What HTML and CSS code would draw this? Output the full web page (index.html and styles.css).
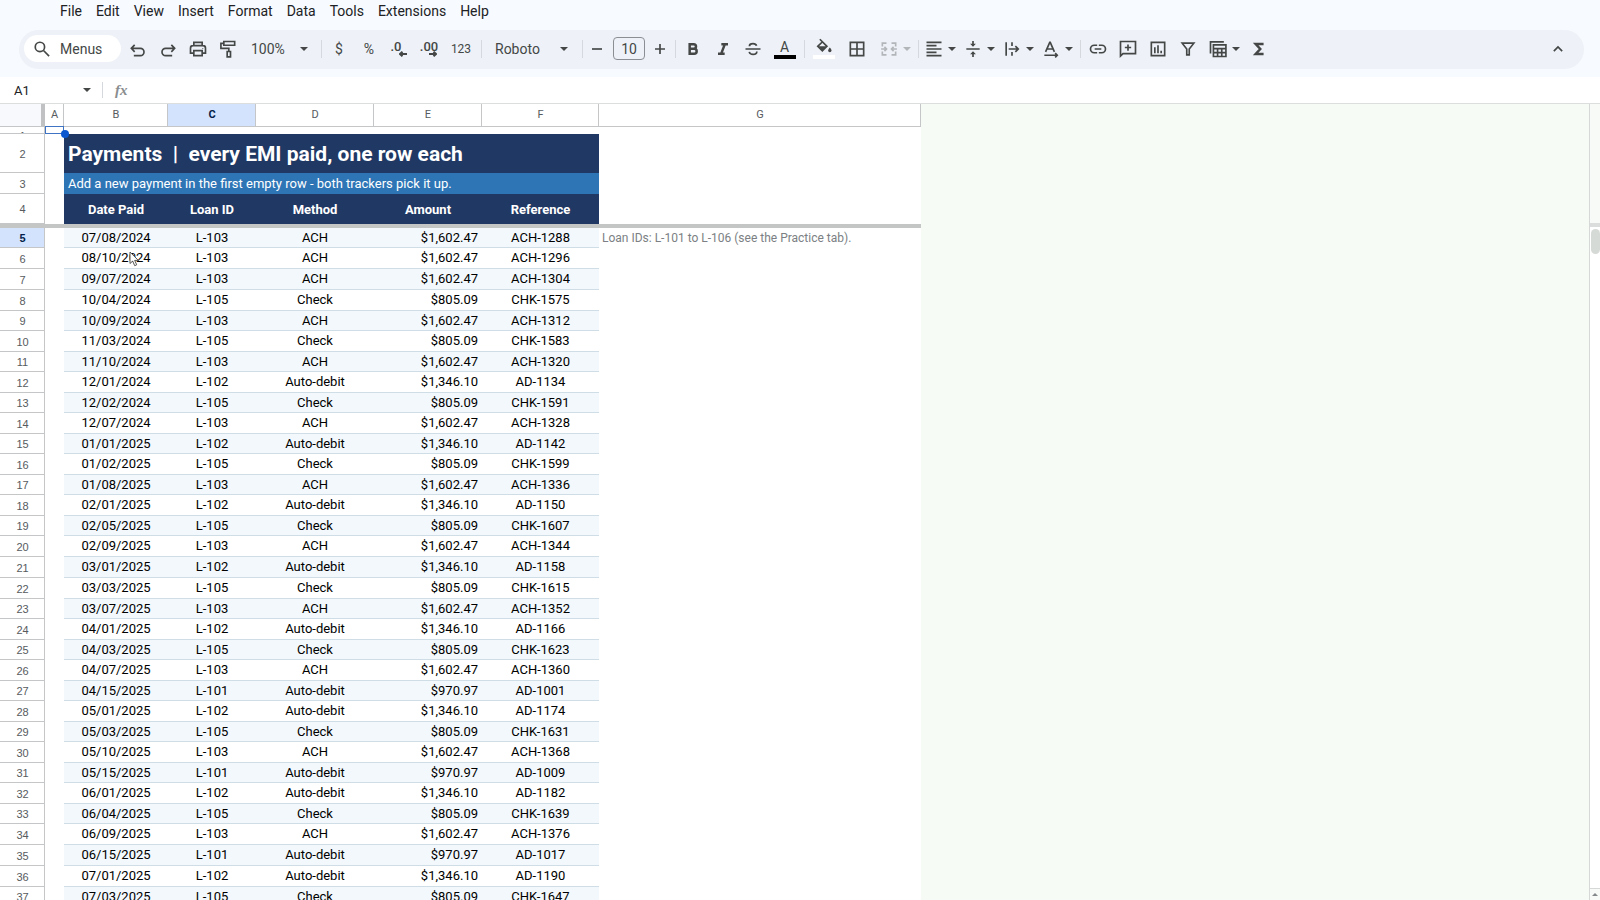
FILE: index.html
```html
<!DOCTYPE html>
<html lang="en">
<head>
<meta charset="utf-8">
<title>Payments</title>
<meta name="viewport" content="width=device-width, initial-scale=1">
<link rel="stylesheet" href="styles.css">
</head>
<body>
<header class="top">
  <nav class="menubar" aria-label="Main menu">
    <button>File</button><button>Edit</button><button>View</button><button>Insert</button><button>Format</button><button>Data</button><button>Tools</button><button>Extensions</button><button>Help</button>
  </nav>
  <div class="toolbar" role="toolbar" aria-label="Formatting">
    <button class="search"><svg class="ic" viewBox="0 0 24 24"><circle cx="9.5" cy="9.5" r="5.6"/><path d="M13.8 13.8L20.5 20.5"/></svg><span>Menus</span></button>
    <button class="tb" aria-label="Undo"><svg class="ic" viewBox="0 0 24 24"><path d="M8 5L4 9.2L8 13.4M4.5 9.2H14.8a4.4 4.4 0 0 1 0 8.8H7" transform="translate(0 2)"/></svg></button>
    <button class="tb" aria-label="Redo"><svg class="ic" viewBox="0 0 24 24"><path d="M16 5L20 9.2L16 13.4M19.5 9.2H9.2a4.4 4.4 0 0 0 0 8.8H17" transform="translate(0 2)"/></svg></button>
    <button class="tb" aria-label="Print"><svg class="ic" viewBox="0 0 24 24"><path d="M7 8V4h10v4M7 17H3v-6a3 3 0 0 1 3-3h12a3 3 0 0 1 3 3v6h-4M7 14h10v6H7z"/><circle class="fill" cx="17.8" cy="11.3" r=".6"/></svg></button>
    <button class="tb" aria-label="Paint format"><svg class="ic" viewBox="0 0 24 24"><path d="M7 3h13v4.5H7zM7 5.2H3.5v6H13V15M11 15h4v6.5h-4z"/></svg></button>
    <label class="zoom"><select aria-label="Zoom"><option>100%</option></select><i class="caret"></i></label>
    <span class="sep"></span>
    <button class="tb cur">$</button>
    <button class="tb cur">%</button>
    <button class="tb dec less" aria-label="Decrease decimal places"><span>.0</span><svg class="arr" viewBox="0 0 8 6"><path d="M8 3H1M3.5 .7L1 3L3.5 5.3"/></svg></button>
    <button class="tb dec" aria-label="Increase decimal places"><span>.00</span><svg class="arr" viewBox="0 0 8 6"><path d="M0 3H7M4.5 .7L7 3L4.5 5.3"/></svg></button>
    <button class="tb num">123</button>
    <span class="sep"></span>
    <label class="font"><select aria-label="Font"><option>Roboto</option></select><i class="caret"></i></label>
    <span class="sep"></span>
    <button class="tb small" aria-label="Decrease font size"><svg class="ic" viewBox="0 0 24 24"><path d="M6 12H18"/></svg></button>
    <input class="size" aria-label="Font size" value="10">
    <button class="tb small" aria-label="Increase font size"><svg class="ic" viewBox="0 0 24 24"><path d="M6 12H18M12 6V18"/></svg></button>
    <span class="sep"></span>
    <button class="tb" aria-label="Bold"><svg class="ic bold" viewBox="0 0 24 24"><path d="M8 6.2h4.8a2.8 2.8 0 0 1 0 5.6H8zM8 11.8h5.4a3 3 0 0 1 0 6H8z"/></svg></button>
    <button class="tb" aria-label="Italic"><svg class="ic ital" viewBox="0 0 24 24"><path d="M10 6.2h8M6 17.8h8M14.2 6.2L9.8 17.8"/></svg></button>
    <button class="tb" aria-label="Strikethrough"><svg class="ic" viewBox="0 0 24 24"><path d="M3 12h18M16.3 8.2C15.8 6.6 14.2 5.6 12 5.6c-2.600 0-4.300 1.200-4.300 3M7.500 15.500c.4 1.900 2.100 3 4.600 3 2.700 0 4.500-1.200 4.500-3.500"/></svg></button>
    <button class="tb color"><span>A</span><i class="bar black"></i></button>
    <span class="sep"></span>
    <button class="tb color" aria-label="Fill color"><svg class="ic" viewBox="0 0 24 24"><path d="M7 1.500L15.500 10L10 15.500L4.500 10L10.200 4.500"/><path class="fill" d="M5 10h10l-5 5z"/><path class="fill" d="M19 11.500s-2 2.300-2 3.600a2 2 0 0 0 4 0c0-1.300-2-3.600-2-3.600z"/></svg><i class="bar white"></i></button>
    <button class="tb wide" aria-label="Borders"><svg class="ic" viewBox="0 0 24 24"><path d="M4 4h16v16H4zM12 4v16M4 12h16"/></svg></button>
    <button class="dd off lead" aria-label="Merge cells"><svg class="ic" viewBox="0 0 24 24"><path d="M9 5H4v4M4 15v4h5M15 5h5v4M20 15v4h-5M2.500 12H9M6.500 9.500L9 12l-2.500 2.500M21.500 12H15M17.500 9.500L15 12l2.500 2.500"/></svg><i class="caret"></i></button>
    <span class="sep"></span>
    <button class="dd" aria-label="Horizontal align"><svg class="ic" viewBox="0 0 24 24"><path d="M3 4h18M3 8h12M3 12h18M3 16h12M3 20h18"/></svg><i class="caret"></i></button>
    <button class="dd" aria-label="Vertical align"><svg class="ic" viewBox="0 0 24 24"><path d="M4 12h16M12 2.500V8M12 21.500V16"/><path class="fill" d="M8.500 5.800h7L12 9.300zM8.500 18.200h7L12 14.700z"/></svg><i class="caret"></i></button>
    <button class="dd" aria-label="Text wrapping"><svg class="ic" viewBox="0 0 24 24"><path d="M5 4v16M12 4v4.500M12 15.500V20M8 12h11.500M16 8.500l3.500 3.500l-3.500 3.500"/></svg><i class="caret"></i></button>
    <button class="dd" aria-label="Text rotation"><svg class="ic" viewBox="0 0 24 24"><path d="M5.500 15.500L10.500 4h.6l5 11.500M7.200 12h7.200M4 19.500h15M17 17l2.500 2.500L17 22"/></svg><i class="caret"></i></button>
    <span class="sep"></span>
    <button class="tb" aria-label="Insert link"><svg class="ic" viewBox="0 0 24 24"><path d="M11 7.500H7.500a4.500 4.500 0 0 0 0 9H11M13 7.500h3.500a4.500 4.500 0 0 1 0 9H13M8 12h8"/></svg></button>
    <button class="tb" aria-label="Insert comment"><svg class="ic" viewBox="0 0 24 24"><path d="M3 3h18v14.500H6L3 20.500zM12 6.500v7.500M8.200 10.200h7.600"/></svg></button>
    <button class="tb" aria-label="Insert chart"><svg class="ic" viewBox="0 0 24 24"><path d="M4 4h16v16H4zM8.200 10v7M12 7.500V17M15.800 14v3"/></svg></button>
    <button class="tb" aria-label="Create a filter"><svg class="ic" viewBox="0 0 24 24"><path d="M5 5h14l-5.500 7v7h-3v-7z"/></svg></button>
    <button class="dd lead" aria-label="Tables"><svg class="ic" viewBox="0 0 24 24"><path d="M3 17.500V3.500h16M6.500 7h15v14h-15zM6.500 11.500h15M6.500 16.300h15M11.500 11.500V21M16.500 11.500V21"/></svg><i class="caret"></i></button>
    <button class="tb" aria-label="Functions"><svg class="ic sigma" viewBox="0 0 24 24"><path d="M17.500 6H8l5.500 6L8 18h9.500"/></svg></button>
    <button class="tb hide" aria-label="Hide the menus"><svg class="ic" viewBox="0 0 24 24"><path d="M7 14.500l5-5l5 5"/></svg></button>
  </div>
</header>
<div class="formula">
  <label class="name"><input aria-label="Name box" value="A1"><i class="caret"></i></label>
  <span class="fsep"></span>
  <label class="fx" for="fbar">fx</label>
  <input class="fbar" id="fbar" aria-label="Formula bar">
</div>
<main class="sheet">
  <div class="pane">
    <table class="grid">
      <colgroup><col class="c0"><col class="c1"><col class="c2"><col class="c3"><col class="c4"><col class="c5"><col class="c6"><col class="c7"></colgroup>
      <thead>
        <tr class="cols"><th class="corner"></th><th>A</th><th>B</th><th class="on">C</th><th>D</th><th>E</th><th>F</th><th>G</th></tr>
        <tr class="r1"><th><div class="clip">1</div></th><td class="sel"><i class="box"></i><i class="dot"></i></td><td colspan="6"></td></tr>
        <tr class="r2"><th>2</th><td></td><td class="title" colspan="5">Payments&nbsp; |&nbsp; every EMI paid, one row each</td><td></td></tr>
        <tr class="r3"><th>3</th><td></td><td class="sub" colspan="5">Add a new payment in the first empty row - both trackers pick it up.</td><td></td></tr>
        <tr class="r4"><th>4</th><td></td><td class="h">Date Paid</td><td class="h">Loan ID</td><td class="h">Method</td><td class="h">Amount</td><td class="h">Reference</td><td></td></tr>
        <tr class="freeze"><td colspan="8"></td></tr>
      </thead>
      <tbody>
        <tr><th class="on">5</th><td></td><td>07/08/2024</td><td>L-103</td><td>ACH</td><td>$1,602.47</td><td>ACH-1288</td><td class="note">Loan IDs: L-101 to L-106 (see the Practice tab).</td></tr>
        <tr><th>6</th><td></td><td>08/10/2024</td><td>L-103</td><td>ACH</td><td>$1,602.47</td><td>ACH-1296</td><td></td></tr>
        <tr><th>7</th><td></td><td>09/07/2024</td><td>L-103</td><td>ACH</td><td>$1,602.47</td><td>ACH-1304</td><td></td></tr>
        <tr><th>8</th><td></td><td>10/04/2024</td><td>L-105</td><td>Check</td><td>$805.09</td><td>CHK-1575</td><td></td></tr>
        <tr><th>9</th><td></td><td>10/09/2024</td><td>L-103</td><td>ACH</td><td>$1,602.47</td><td>ACH-1312</td><td></td></tr>
        <tr><th>10</th><td></td><td>11/03/2024</td><td>L-105</td><td>Check</td><td>$805.09</td><td>CHK-1583</td><td></td></tr>
        <tr><th>11</th><td></td><td>11/10/2024</td><td>L-103</td><td>ACH</td><td>$1,602.47</td><td>ACH-1320</td><td></td></tr>
        <tr><th>12</th><td></td><td>12/01/2024</td><td>L-102</td><td>Auto-debit</td><td>$1,346.10</td><td>AD-1134</td><td></td></tr>
        <tr><th>13</th><td></td><td>12/02/2024</td><td>L-105</td><td>Check</td><td>$805.09</td><td>CHK-1591</td><td></td></tr>
        <tr><th>14</th><td></td><td>12/07/2024</td><td>L-103</td><td>ACH</td><td>$1,602.47</td><td>ACH-1328</td><td></td></tr>
        <tr><th>15</th><td></td><td>01/01/2025</td><td>L-102</td><td>Auto-debit</td><td>$1,346.10</td><td>AD-1142</td><td></td></tr>
        <tr><th>16</th><td></td><td>01/02/2025</td><td>L-105</td><td>Check</td><td>$805.09</td><td>CHK-1599</td><td></td></tr>
        <tr><th>17</th><td></td><td>01/08/2025</td><td>L-103</td><td>ACH</td><td>$1,602.47</td><td>ACH-1336</td><td></td></tr>
        <tr><th>18</th><td></td><td>02/01/2025</td><td>L-102</td><td>Auto-debit</td><td>$1,346.10</td><td>AD-1150</td><td></td></tr>
        <tr><th>19</th><td></td><td>02/05/2025</td><td>L-105</td><td>Check</td><td>$805.09</td><td>CHK-1607</td><td></td></tr>
        <tr><th>20</th><td></td><td>02/09/2025</td><td>L-103</td><td>ACH</td><td>$1,602.47</td><td>ACH-1344</td><td></td></tr>
        <tr><th>21</th><td></td><td>03/01/2025</td><td>L-102</td><td>Auto-debit</td><td>$1,346.10</td><td>AD-1158</td><td></td></tr>
        <tr><th>22</th><td></td><td>03/03/2025</td><td>L-105</td><td>Check</td><td>$805.09</td><td>CHK-1615</td><td></td></tr>
        <tr><th>23</th><td></td><td>03/07/2025</td><td>L-103</td><td>ACH</td><td>$1,602.47</td><td>ACH-1352</td><td></td></tr>
        <tr><th>24</th><td></td><td>04/01/2025</td><td>L-102</td><td>Auto-debit</td><td>$1,346.10</td><td>AD-1166</td><td></td></tr>
        <tr><th>25</th><td></td><td>04/03/2025</td><td>L-105</td><td>Check</td><td>$805.09</td><td>CHK-1623</td><td></td></tr>
        <tr><th>26</th><td></td><td>04/07/2025</td><td>L-103</td><td>ACH</td><td>$1,602.47</td><td>ACH-1360</td><td></td></tr>
        <tr><th>27</th><td></td><td>04/15/2025</td><td>L-101</td><td>Auto-debit</td><td>$970.97</td><td>AD-1001</td><td></td></tr>
        <tr><th>28</th><td></td><td>05/01/2025</td><td>L-102</td><td>Auto-debit</td><td>$1,346.10</td><td>AD-1174</td><td></td></tr>
        <tr><th>29</th><td></td><td>05/03/2025</td><td>L-105</td><td>Check</td><td>$805.09</td><td>CHK-1631</td><td></td></tr>
        <tr><th>30</th><td></td><td>05/10/2025</td><td>L-103</td><td>ACH</td><td>$1,602.47</td><td>ACH-1368</td><td></td></tr>
        <tr><th>31</th><td></td><td>05/15/2025</td><td>L-101</td><td>Auto-debit</td><td>$970.97</td><td>AD-1009</td><td></td></tr>
        <tr><th>32</th><td></td><td>06/01/2025</td><td>L-102</td><td>Auto-debit</td><td>$1,346.10</td><td>AD-1182</td><td></td></tr>
        <tr><th>33</th><td></td><td>06/04/2025</td><td>L-105</td><td>Check</td><td>$805.09</td><td>CHK-1639</td><td></td></tr>
        <tr><th>34</th><td></td><td>06/09/2025</td><td>L-103</td><td>ACH</td><td>$1,602.47</td><td>ACH-1376</td><td></td></tr>
        <tr><th>35</th><td></td><td>06/15/2025</td><td>L-101</td><td>Auto-debit</td><td>$970.97</td><td>AD-1017</td><td></td></tr>
        <tr><th>36</th><td></td><td>07/01/2025</td><td>L-102</td><td>Auto-debit</td><td>$1,346.10</td><td>AD-1190</td><td></td></tr>
        <tr><th>37</th><td></td><td>07/03/2025</td><td>L-105</td><td>Check</td><td>$805.09</td><td>CHK-1647</td><td></td></tr>
      </tbody>
    </table>
    <svg class="pointer" viewBox="0 0 10 16"><path d="M1 1v11.500l2.700-2.400l2 4.600l2-.9l-2-4.400h3.600z"/></svg>
  </div>
  <div class="vbar">
    <div class="vtop"></div>
    <div class="track"><div class="thumb"></div></div>
    <button class="up" aria-label="Scroll up"><i></i></button>
  </div>
</main>
</body>
</html>
```

FILE: styles.css
```css
* { box-sizing: border-box; }

body {
  margin: 0;
  height: 100vh;
  overflow: hidden;
  display: flex;
  flex-direction: column;
  background: #fefffe;
  color: #444746;
  font-family: Roboto, "Liberation Sans", sans-serif;
  font-size: 14px;
}

button, input, select {
  font: inherit;
  color: inherit;
  background: none;
  border: 0;
  padding: 0;
  margin: 0;
  outline: 0;
  appearance: none;
}

/* Header */
.top {
  flex: none;
  background: #f7fafe;
  padding: 0 16px 8px 19px;
}
.menubar {
  display: flex;
  gap: 14px;
  height: 22px;
  margin-bottom: 8px;
  padding-left: 41px;
  color: #202124;
}
.toolbar {
  display: flex;
  align-items: center;
  height: 39px;
  padding: 0 11px 2px 5px;
  border-radius: 20px;
  background: #eef2f8;
}
.search {
  display: flex;
  align-items: center;
  gap: 8px;
  width: 97px;
  height: 27px;
  margin-right: 2px;
  padding-left: 8px;
  border-radius: 14px;
  background: #fefffe;
}

.ic {
  display: block;
  width: 20px;
  height: 20px;
  flex: none;
  fill: none;
  stroke: currentColor;
  stroke-width: 2;
}
.ic .fill { fill: currentColor; stroke: none; }
.ic.bold, .ic.ital, .ic.sigma { stroke-width: 3; }

.tb {
  display: flex;
  align-items: center;
  justify-content: center;
  flex: none;
  width: 30px;
  height: 28px;
}
.tb.small { width: 24px; }
.tb.wide { width: 34px; }
.tb.num { width: 34px; font-size: 12px; }
.tb.cur { font-size: 14px; }
.tb.dec {
  flex-direction: column;
  font-size: 13px;
  font-weight: 500;
  line-height: 12px;
}
.less span { margin-right: 6px; }
.arr {
  width: 8px;
  height: 6px;
  margin-left: 8px;
  margin-top: -2px;
  fill: none;
  stroke: currentColor;
  stroke-width: 2;
}
.tb.color {
  flex-direction: column;
  width: 33px;
  height: 28px;
  justify-content: flex-end;
  padding-bottom: 4px;
  line-height: 15px;
}
.tb.color .ic { margin-bottom: -3px; }
.bar { width: 22px; height: 4px; }
.black { background: #000; }
.white { background: #fff; }

.sep {
  flex: none;
  width: 6px;
  height: 18px;
  background: linear-gradient(#d5d9de, #d5d9de) center / 1px 100% no-repeat;
}
.caret {
  flex: none;
  border: 4px solid transparent;
  border-top-color: currentColor;
  border-bottom: 0;
}
.zoom, .font {
  display: flex;
  align-items: center;
  justify-content: space-between;
  flex: none;
}
.zoom { width: 75px; padding: 0 10px 0 8px; }
.font { width: 95px; padding: 0 11px; }
.size {
  width: 32px;
  height: 23px;
  margin: 0 3px 0 4px;
  border: 1px solid #8b8f94;
  border-radius: 4px;
  text-align: center;
}
.dd {
  display: flex;
  align-items: center;
  gap: 4px;
  flex: none;
  width: 39px;
  padding-left: 3px;
}
.dd.lead { width: 41px; padding-left: 5px; }
.off { color: #b3b6b9; }
.hide { margin-left: auto; }

/* Formula bar */
.formula {
  display: flex;
  align-items: center;
  flex: none;
  height: 27px;
  border-bottom: 1px solid #dcdedd;
}
.name {
  display: flex;
  align-items: center;
  width: 91px;
  padding-left: 14px;
  font-size: 13px;
  color: #202124;
}
.name input { flex: 1; min-width: 0; }
.name .caret { color: #444746; }
.fsep { width: 1px; height: 16px; margin: 0 12px 0 11px; background: #d5d9de; }
.fx { font: italic 700 15px "Liberation Serif", serif; color: #8a8d90; }
.fbar { flex: 1; margin-left: 12px; font-size: 13px; }

/* Sheet */
.sheet { flex: 1; min-height: 0; display: flex; }
.pane {
  flex: 1;
  min-width: 0;
  position: relative;
  overflow: hidden;
  background: #f6fbf5;
}
.grid {
  width: 921px;
  table-layout: fixed;
  border-collapse: separate;
  border-spacing: 0;
  background: #fefffe;
  color: #000;
  font-size: 13px;
  line-height: 16px;
}
.c0 { width: 45px; }
.c1 { width: 19px; }
.c2 { width: 104px; }
.c3 { width: 88px; }
.c4 { width: 118px; }
.c5 { width: 108px; }
.c6 { width: 117px; }
.c7 { width: 322px; }

.grid td { padding: 0 4px; text-align: center; white-space: nowrap; }
.grid th {
  padding: 1px 0 0 1px;
  border-right: 1px solid #c4c6c7;
  border-bottom: 1px solid #c4c6c7;
  font-family: "Liberation Sans", Arial, sans-serif;
  font-size: 11px;
  font-weight: 400;
  line-height: 14px;
  color: #575b5f;
}
.grid .on { background: #d3e3fd; color: #041e49; font-weight: 700; }
.grid .cols th { height: 23px; padding-top: 0; font-family: inherit; }
.grid .corner { background: #f8f9fc; border-right: 4px solid #bfc1c2; }

.r1 th, .r1 td { height: 7px; line-height: 0; }
.grid .r1 th { padding: 0 0 0 1px; }
.clip { height: 6px; padding-top: 2px; overflow: hidden; line-height: 14px; }
.sel { position: relative; }
.box {
  position: absolute;
  inset: -1px 0 0 0;
  border: 1px solid #3f73c4;
}
.dot {
  position: absolute;
  right: -5px;
  bottom: -4px;
  width: 8px;
  height: 8px;
  border-radius: 50%;
  background: #0b57d0;
}
.r2 td { height: 39px; }
.r3 td { height: 21px; }
.r4 td { height: 30px; }
.grid .title, .grid .sub { text-align: left; color: #fff; }
.grid .title { background: #1f3864; font-size: 21px; font-weight: 700; }
.grid .sub { background: #2e75b6; }
.grid .h { background: #1f3864; color: #fff; font-weight: 700; padding-top: 1px; }
.grid .freeze td { height: 4px; padding: 0; background: #c4c6c6; }

/* Body rows average just over 20px, so the heights alternate */
tbody td { height: 21px; }
tbody tr:nth-child(odd) td { height: 20px; }
tbody tr:nth-child(14n + 3) td { height: 21px; }
tbody td:nth-child(n + 3):nth-child(-n + 7) { border-bottom: 1px solid #cfdde6; }
tbody tr:nth-child(odd) td:nth-child(n + 3):nth-child(-n + 7) { background: #f3f8fc; }
tbody td:nth-child(6) { text-align: right; }
.grid .note { padding-left: 3px; text-align: left; font-size: 12px; color: #7c8084; line-height: 14px; }

.pointer {
  position: absolute;
  left: 129px;
  top: 147px;
  width: 10px;
  height: 16px;
  fill: #fff;
  stroke: #555;
}

/* Scrollbar */
.vbar {
  display: flex;
  flex-direction: column;
  flex: none;
  width: 11px;
  border-left: 1px solid #d5d8d6;
}
.vtop { height: 123px; background: #f8faf8; border-bottom: 4px solid #dadddb; }
.track { flex: 1; padding: 2px 0 0 1px; }
.thumb { height: 25px; border-radius: 5px; background: #d6dad7; }
.up {
  display: flex;
  align-items: center;
  justify-content: center;
  height: 12px;
  border-top: 1px solid #d5d8d6;
  background: #f8faf8;
}
.up i { border: 3px solid transparent; border-bottom-color: #85888a; border-top: 0; }
```
